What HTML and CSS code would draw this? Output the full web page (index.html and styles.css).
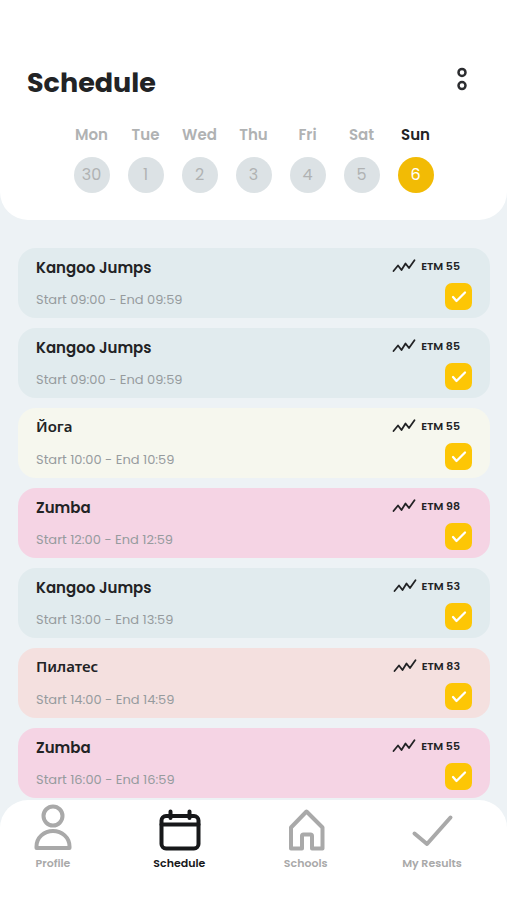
FILE: index.html
```html
<!DOCTYPE html>
<html lang="en">
<head>
<meta charset="utf-8">
<meta name="viewport" content="width=device-width, initial-scale=1">
<title>Schedule</title>
<link rel="stylesheet" href="styles.css">
</head>
<body>
<svg class="sprite" aria-hidden="true">
  <symbol id="trend" viewBox="0 0 24 14"><path d="M1.500 12 L6 6.500 L9.500 11 L13.500 4.500 L17 9 L22.500 1.300" fill="none" stroke="currentColor" stroke-width="1.800" stroke-linecap="round" stroke-linejoin="round"/></symbol>
  <symbol id="tick" viewBox="0 0 27 27"><path d="M8 14 L11.500 18 L20 9.500" fill="none" stroke="currentColor" stroke-width="2.300" stroke-linecap="round" stroke-linejoin="round"/></symbol>
</svg>
<header class="header">
  <div class="title-row">
    <h1 class="title">Schedule</h1>
    <button class="more" type="button" aria-label="More options">
      <svg width="12" height="24" viewBox="0 0 12 24" fill="none" stroke="currentColor" stroke-width="2.500"><circle cx="6" cy="5.400" r="3.500"/><circle cx="6" cy="18.600" r="3.500"/></svg>
    </button>
  </div>
  <div class="days">
    <button class="day" type="button"><span class="weekday">Mon</span><span class="date">30</span></button>
    <button class="day" type="button"><span class="weekday">Tue</span><span class="date">1</span></button>
    <button class="day" type="button"><span class="weekday">Wed</span><span class="date">2</span></button>
    <button class="day" type="button"><span class="weekday">Thu</span><span class="date">3</span></button>
    <button class="day" type="button"><span class="weekday">Fri</span><span class="date">4</span></button>
    <button class="day" type="button"><span class="weekday">Sat</span><span class="date">5</span></button>
    <button class="day day-active" type="button" aria-current="date"><span class="weekday">Sun</span><span class="date">6</span></button>
  </div>
</header>
<main class="list">
  <article class="card blue">
    <div class="info"><h2 class="name">Kangoo Jumps</h2><p class="time">Start 09:00 - End 09:59</p></div>
    <div class="side"><span class="etm"><svg class="trend"><use href="#trend"/></svg>ETM 55</span><label class="check"><input type="checkbox" checked aria-label="Kangoo Jumps, 09:00, ETM 55"><svg><use href="#tick"/></svg></label></div>
  </article>
  <article class="card blue">
    <div class="info"><h2 class="name">Kangoo Jumps</h2><p class="time">Start 09:00 - End 09:59</p></div>
    <div class="side"><span class="etm"><svg class="trend"><use href="#trend"/></svg>ETM 85</span><label class="check"><input type="checkbox" checked aria-label="Kangoo Jumps, 09:00, ETM 85"><svg><use href="#tick"/></svg></label></div>
  </article>
  <article class="card cream">
    <div class="info"><h2 class="name cyrillic" lang="ru">Йога</h2><p class="time">Start 10:00 - End 10:59</p></div>
    <div class="side"><span class="etm"><svg class="trend"><use href="#trend"/></svg>ETM 55</span><label class="check"><input type="checkbox" checked aria-label="Йога, 10:00"><svg><use href="#tick"/></svg></label></div>
  </article>
  <article class="card pink">
    <div class="info"><h2 class="name">Zumba</h2><p class="time">Start 12:00 - End 12:59</p></div>
    <div class="side"><span class="etm"><svg class="trend"><use href="#trend"/></svg>ETM 98</span><label class="check"><input type="checkbox" checked aria-label="Zumba, 12:00"><svg><use href="#tick"/></svg></label></div>
  </article>
  <article class="card blue">
    <div class="info"><h2 class="name">Kangoo Jumps</h2><p class="time">Start 13:00 - End 13:59</p></div>
    <div class="side"><span class="etm"><svg class="trend"><use href="#trend"/></svg>ETM 53</span><label class="check"><input type="checkbox" checked aria-label="Kangoo Jumps, 13:00"><svg><use href="#tick"/></svg></label></div>
  </article>
  <article class="card peach">
    <div class="info"><h2 class="name cyrillic" lang="ru">Пилатес</h2><p class="time">Start 14:00 - End 14:59</p></div>
    <div class="side"><span class="etm"><svg class="trend"><use href="#trend"/></svg>ETM 83</span><label class="check"><input type="checkbox" checked aria-label="Пилатес, 14:00"><svg><use href="#tick"/></svg></label></div>
  </article>
  <article class="card pink">
    <div class="info"><h2 class="name">Zumba</h2><p class="time">Start 16:00 - End 16:59</p></div>
    <div class="side"><span class="etm"><svg class="trend"><use href="#trend"/></svg>ETM 55</span><label class="check"><input type="checkbox" checked aria-label="Zumba, 16:00"><svg><use href="#tick"/></svg></label></div>
  </article>
</main>
<nav class="tabs">
  <a class="tab" href="#profile">
    <svg class="tab-icon" viewBox="0 0 48 48"><circle cx="24" cy="12" r="9.500"/><path d="M7.500 44 V42.500 C7.500 33.500 15 27 24 27 S40.500 33.500 40.500 42.500 V44 Z"/></svg>
    Profile
  </a>
  <a class="tab tab-active" href="#schedule" aria-current="page">
    <svg class="tab-icon" viewBox="0 0 48 48"><rect x="6.500" y="12" width="37" height="32.500" rx="4.500"/><path d="M6.500 20.500 H43.500 M15.500 7.500 V14 M34.500 7.500 V14"/></svg>
    Schedule
  </a>
  <a class="tab" href="#schools">
    <svg class="tab-icon" viewBox="0 0 48 48"><path d="M9 44.500 V23.500 L24.500 7.500 L40.500 23.500 V44.500 H30 V32 Q30 30.500 28.500 30.500 H21.500 Q20 30.500 20 32 V44.500 Z"/></svg>
    Schools
  </a>
  <a class="tab" href="#results">
    <svg class="tab-icon" viewBox="0 0 48 48"><path d="M6.500 29.500 L19 40 L42.500 13.500"/></svg>
    My Results
  </a>
</nav>
</body>
</html>
```
FILE: styles.css
```css
* { box-sizing: border-box; }

body {
  margin: 0;
  min-height: 100vh;
  display: flex;
  flex-direction: column;
  background: #edf2f5;
  color: #222325;
  font-family: Poppins, Inter, sans-serif;
}

h1, h2, p { margin: 0; }
button { padding: 0; border: 0; background: none; color: inherit; font: inherit; cursor: pointer; }
.sprite { position: absolute; width: 0; height: 0; }

.header {
  padding: 64px 39px 27px 27px;
  background: #fff;
  border-radius: 0 0 28px 28px;
}
.title-row { display: flex; justify-content: space-between; }
.title { font-size: 27px; line-height: 38px; font-weight: 700; }
.more { display: flex; align-self: flex-start; padding-top: 3px; color: #2c2d30; }

.days {
  display: flex;
  justify-content: center;
  gap: 18px;
  margin: 22px 0 0 12px;
}
.day { width: 36px; display: flex; flex-direction: column; align-items: center; gap: 11px; color: #b0b2b3; }
.weekday { font-size: 15px; line-height: 22px; font-weight: 600; }
.date {
  width: 36px;
  height: 36px;
  border-radius: 50%;
  background: #dce2e5;
  font-size: 16px;
  line-height: 36px;
  text-align: center;
}
.day-active { color: #222325; }
.day-active .date { background: #f2bb05; color: #fff; }

.list { display: flex; flex-direction: column; gap: 10px; padding: 28px 17px 2px 18px; }
.card {
  display: flex;
  justify-content: space-between;
  padding: 8px 18px;
  border-radius: 18px;
}
.blue { background: #e1ebee; }
.cream { background: #f6f7ee; }
.pink { background: #f5d4e4; }
.peach { background: #f4e0df; }

.info { display: flex; flex-direction: column; gap: 10px; }
.name { font-size: 15px; line-height: 24px; font-weight: 600; }
.cyrillic { font-family: "Noto Sans", sans-serif; line-height: 20px; margin-bottom: 4px; }
.time { font-size: 13px; line-height: 20px; color: #969b9e; }

.side { display: flex; flex-direction: column; align-items: flex-end; gap: 7px; }
.etm { display: flex; align-items: center; gap: 5px; padding-right: 12px; font-size: 11px; line-height: 20px; font-weight: 600; }
.trend { width: 24px; height: 14px; }
.check { display: grid; cursor: pointer; }
.check input, .check svg { grid-area: 1 / 1; width: 27px; height: 27px; margin: 0; }
.check input { appearance: none; border-radius: 7px; background: #fff; }
.check input:checked { background: #fdc605; }
.check svg { color: #fff; pointer-events: none; }

.tabs {
  flex: 1;
  display: flex;
  justify-content: space-between;
  padding: 4px 39px 24px 17px;
  background: #fff;
  border-radius: 28px 28px 0 0;
}
.tab {
  width: 72px;
  display: flex;
  flex-direction: column;
  align-items: center;
  gap: 3px;
  color: #a9a9a9;
  font-size: 11px;
  line-height: 16px;
  font-weight: 600;
  text-decoration: none;
}
.tab-icon { width: 48px; height: 48px; fill: none; stroke: currentColor; stroke-width: 4; stroke-linecap: round; stroke-linejoin: round; }
.tab-active { color: #17181a; }
```
